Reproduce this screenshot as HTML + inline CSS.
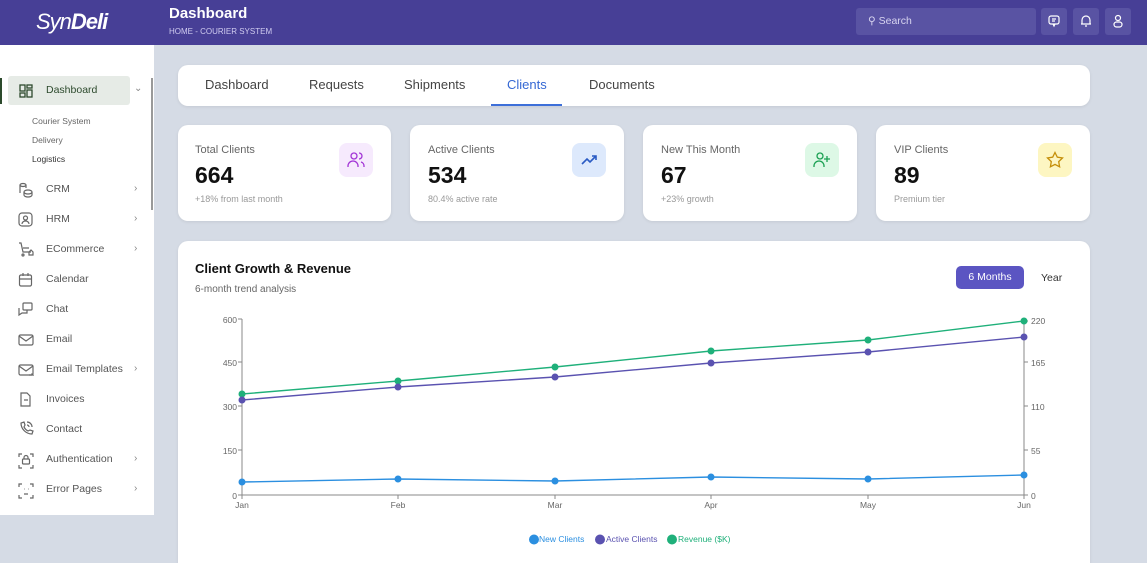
<!DOCTYPE html>
<html><head><meta charset="utf-8"><style>
*{margin:0;padding:0;box-sizing:border-box}
html,body{width:1147px;height:563px;overflow:hidden}
body{background:#d5dbe5;font-family:"Liberation Sans",sans-serif;position:relative}
.a{position:absolute}
.hdr{left:0;top:0;width:1147px;height:45px;background:#473f96}
.sb{left:0;top:45px;width:154px;height:470px;background:#fff}
.card{background:#fff;border-radius:10px;box-shadow:0 1px 3px rgba(0,0,0,.08)}
.nav{position:absolute;left:46px;font-size:10.5px;color:#555}
.ic{position:absolute;left:19px;width:14px;height:14px}
.chev{position:absolute;left:134px;font-size:10px;color:#888}
.tab{position:absolute;top:77px;font-size:13px;color:#444}
.lbl{position:absolute;font-size:11px;color:#666}
.num{position:absolute;font-size:23px;font-weight:bold;color:#111}
.sub{position:absolute;font-size:9px;color:#999}
.ib{position:absolute;width:34px;height:34px;border-radius:8px}
</style></head><body>
<div class="a hdr"></div>
<div class="a" style="left:36px;top:9px;color:#fff;font-size:22px;font-style:italic;letter-spacing:-1px">Syn<b>Deli</b></div>
<div class="a" style="left:169px;top:5px;color:#fff;font-size:15px;font-weight:bold">Dashboard</div>
<div class="a" style="left:169px;top:27px;color:#d0ccf0;font-size:8px">HOME - COURIER SYSTEM</div>
<div class="a" style="left:856px;top:8px;width:180px;height:27px;background:#5953a3;border-radius:3px"></div>
<div class="a" style="left:868px;top:15px;color:#d8d5f0;font-size:10.5px">&#9906; Search</div>
<div class="a" style="left:1041px;top:8px;width:26px;height:27px;background:#5953a3;border-radius:3px"></div>
<div class="a" style="left:1073px;top:8px;width:26px;height:27px;background:#5953a3;border-radius:3px"></div>
<div class="a" style="left:1105px;top:8px;width:26px;height:27px;background:#5953a3;border-radius:3px"></div>
<svg class="a" style="left:1047px;top:14px" width="14" height="14" viewBox="0 0 14 14" fill="none" stroke="#fff" stroke-width="1.2"><rect x="2" y="2" width="10" height="8" rx="2"/><path d="M5 5h4M5 7h3M6 10l1 2 1-2"/></svg>
<svg class="a" style="left:1079px;top:14px" width="14" height="14" viewBox="0 0 14 14" fill="none" stroke="#fff" stroke-width="1.2"><path d="M3 10V6a4 4 0 018 0v4zM2 10h10M6 12h2"/></svg>
<svg class="a" style="left:1111px;top:14px" width="14" height="14" viewBox="0 0 14 14" fill="none" stroke="#fff" stroke-width="1.2"><circle cx="7" cy="4" r="2.5"/><rect x="3" y="8" width="8" height="5" rx="2.5"/></svg>

<div class="a sb"></div>
<div class="a" style="left:151px;top:78px;width:2px;height:132px;background:#999"></div>
<div class="a" style="left:0;top:78px;width:2px;height:26px;background:#2c4a2c"></div>
<div class="a" style="left:8px;top:76px;width:122px;height:29px;background:#e6ebe6;border-radius:3px"></div>
<svg class="ic" style="top:84px" viewBox="0 0 14 14" fill="none" stroke="#2d4a2d" stroke-width="1.3"><rect x="1" y="1" width="5" height="6"/><rect x="8" y="1" width="5" height="3"/><rect x="8" y="6" width="5" height="7"/><rect x="1" y="9" width="5" height="4"/></svg>
<div class="nav" style="top:84px;color:#2d4a2d">Dashboard</div>
<div class="chev" style="top:83px">&#8964;</div>
<div class="a" style="left:32px;top:116px;font-size:8.5px;color:#666">Courier System</div>
<div class="a" style="left:32px;top:135px;font-size:8.5px;color:#666">Delivery</div>
<div class="a" style="left:32px;top:154px;font-size:8.5px;color:#333">Logistics</div>
<div class="nav" style="top:183px">CRM</div><div class="chev" style="top:183px">&#8250;</div>
<div class="nav" style="top:213px">HRM</div><div class="chev" style="top:213px">&#8250;</div>
<div class="nav" style="top:243px">ECommerce</div><div class="chev" style="top:243px">&#8250;</div>
<div class="nav" style="top:273px">Calendar</div>
<div class="nav" style="top:303px">Chat</div>
<div class="nav" style="top:333px">Email</div>
<div class="nav" style="top:363px">Email Templates</div><div class="chev" style="top:363px">&#8250;</div>
<div class="nav" style="top:393px">Invoices</div>
<div class="nav" style="top:423px">Contact</div>
<div class="nav" style="top:453px">Authentication</div><div class="chev" style="top:453px">&#8250;</div>
<div class="nav" style="top:483px">Error Pages</div><div class="chev" style="top:483px">&#8250;</div>
<svg class="a" style="left:18px;top:182px" width="16" height="320" viewBox="0 0 16 320" fill="none" stroke="#666" stroke-width="1.2">
<ellipse cx="5" cy="3" rx="3" ry="1.5"/><path d="M2 3v8M8 3v3"/><ellipse cx="10" cy="10" rx="4" ry="2"/><path d="M6 10v3a4 2 0 008 0v-3"/>
<rect x="1" y="31" width="13" height="13" rx="3"/><circle cx="7.5" cy="36" r="2"/><path d="M4 42a3.5 3 0 017 0"/>
<path d="M1 61h2l2 9h8M5 66h6"/><circle cx="5" cy="73" r="1"/><path d="M11 70l2-2 2 2v3h-4z"/>
<rect x="1.5" y="93" width="12" height="11" rx="1.5"/><path d="M1.5 97h12M5 91v3M10 91v3"/>
<rect x="5" y="121" width="9" height="7" rx="1"/><path d="M1 126v7l3-2h5v-3"/>
<rect x="1" y="153" width="14" height="10" rx="1.5"/><path d="M1 154l7 5 7-5"/>
<rect x="1" y="183" width="14" height="10" rx="1.5"/><path d="M1 184l7 5 7-5M11 193h4l-1.5-1.5"/>
<path d="M3 211h6l3 3v10H3z M6 218h4"/>
<path d="M3 241c0 6 5 11 11 11l1-3-3-1-2 1c-2-1-3-2-4-4l1-2-1-3z M9 240a5 5 0 015 5M9 243a2 2 0 012 2"/>
<path d="M1 275v-3h3M12 272h3v3M15 283v3h-3M4 286H1v-3"/><rect x="4.5" y="277" width="7" height="5" rx="1"/><path d="M6 277v-1.5a2 2 0 014 0V277"/>
<path d="M1 305v-3h3M12 302h3v3M15 313v3h-3M4 316H1v-3M6 307h.5M10 307h.5M6 312h4"/>
</svg>

<div class="a card" style="left:178px;top:65px;width:912px;height:41px"></div>
<div class="tab" style="left:205px">Dashboard</div>
<div class="tab" style="left:309px">Requests</div>
<div class="tab" style="left:404px">Shipments</div>
<div class="tab" style="left:507px;color:#3568d4">Clients</div>
<div class="tab" style="left:589px">Documents</div>
<div class="a" style="left:491px;top:104px;width:71px;height:2px;background:#3d6fd9"></div>

<div class="a card" style="left:178px;top:125px;width:213px;height:96px"></div>
<div class="a card" style="left:410px;top:125px;width:214px;height:96px"></div>
<div class="a card" style="left:643px;top:125px;width:214px;height:96px"></div>
<div class="a card" style="left:876px;top:125px;width:214px;height:96px"></div>
<div class="lbl" style="left:195px;top:144px">Total Clients</div><div class="num" style="left:195px;top:162px">664</div><div class="sub" style="left:195px;top:194px">+18% from last month</div>
<div class="lbl" style="left:428px;top:144px">Active Clients</div><div class="num" style="left:428px;top:162px">534</div><div class="sub" style="left:428px;top:194px">80.4% active rate</div>
<div class="lbl" style="left:661px;top:144px">New This Month</div><div class="num" style="left:661px;top:162px">67</div><div class="sub" style="left:661px;top:194px">+23% growth</div>
<div class="lbl" style="left:894px;top:144px">VIP Clients</div><div class="num" style="left:894px;top:162px">89</div><div class="sub" style="left:894px;top:194px">Premium tier</div>
<div class="ib" style="left:339px;top:143px;background:#f6eafd"></div>
<div class="ib" style="left:572px;top:143px;background:#dde9fc"></div>
<div class="ib" style="left:805px;top:143px;background:#ddf8e6"></div>
<div class="ib" style="left:1038px;top:143px;background:#fdf6c2"></div>
<svg class="a" style="left:347px;top:151px" width="18" height="18" viewBox="0 0 18 18" fill="none" stroke="#a235d6" stroke-width="1.3"><circle cx="7" cy="5" r="3"/><path d="M1 16v-1a5 5 0 0110 0v1M12 2a3 3 0 010 6M14 11a4 4 0 013 4v1"/></svg>
<svg class="a" style="left:580px;top:151px" width="18" height="18" viewBox="0 0 18 18" fill="none" stroke="#2a5bc4" stroke-width="1.6"><path d="M2 13l5-5 3 3 6-6M12 5h4v4"/></svg>
<svg class="a" style="left:813px;top:151px" width="18" height="18" viewBox="0 0 18 18" fill="none" stroke="#1aa052" stroke-width="1.3"><circle cx="7" cy="5" r="3"/><path d="M1 16v-1a5 5 0 0110 0v1M14 5v6M11 8h6"/></svg>
<svg class="a" style="left:1046px;top:151px" width="18" height="18" viewBox="0 0 18 18" fill="none" stroke="#c58f0a" stroke-width="1.3"><path d="M9 1.5l2.3 4.7 5.2.8-3.8 3.6.9 5.2L9 13.4l-4.6 2.4.9-5.2L1.5 7l5.2-.8z"/></svg>

<div class="a card" style="left:178px;top:241px;width:912px;height:340px;border-radius:10px 10px 0 0"></div>
<div class="a" style="left:195px;top:261px;font-size:13px;font-weight:bold;color:#111">Client Growth &amp; Revenue</div>
<div class="a" style="left:195px;top:284px;font-size:10px;color:#666">6-month trend analysis</div>
<div class="a" style="left:956px;top:266px;width:68px;height:23px;background:#5b55c2;border-radius:5px;color:#fff;font-size:10.5px;text-align:center;line-height:23px">6 Months</div>
<div class="a" style="left:1041px;top:272px;font-size:10.5px;color:#333">Year</div>

<svg class="a" style="left:0;top:0" width="1147" height="563" font-family="Liberation Sans, sans-serif" font-size="8.5" fill="#666">
<g stroke="#888" stroke-width="1" fill="none"><path d="M242 319V495H1024V319"/><path d="M238 319h4M238 362h4M238 406h4M238 450h4M238 495h4M1024 321h4M1024 362h4M1024 406h4M1024 450h4M1024 495h4M242 495v4M398 495v4M555 495v4M711 495v4M868 495v4M1024 495v4"/></g>
<g text-anchor="end"><text x="237" y="323">600</text><text x="237" y="366">450</text><text x="237" y="410">300</text><text x="237" y="454">150</text><text x="237" y="499">0</text></g>
<text x="1031" y="324">220</text><text x="1031" y="366">165</text><text x="1031" y="410">110</text><text x="1031" y="454">55</text><text x="1031" y="499">0</text>
<g text-anchor="middle"><text x="242" y="508">Jan</text><text x="398" y="508">Feb</text><text x="555" y="508">Mar</text><text x="711" y="508">Apr</text><text x="868" y="508">May</text><text x="1024" y="508">Jun</text></g>
<polyline fill="none" stroke="#1fb07a" stroke-width="1.4" points="242,394 398,381 555,367 711,351 868,340 1024,321"/>
<polyline fill="none" stroke="#5a52b0" stroke-width="1.4" points="242,400 398,387 555,377 711,363 868,352 1024,337"/>
<polyline fill="none" stroke="#2b8fe0" stroke-width="1.4" points="242,482 398,479 555,481 711,477 868,479 1024,475"/>
<g fill="#1fb07a"><circle cx="242" cy="394" r="3.5"/><circle cx="398" cy="381" r="3.5"/><circle cx="555" cy="367" r="3.5"/><circle cx="711" cy="351" r="3.5"/><circle cx="868" cy="340" r="3.5"/><circle cx="1024" cy="321" r="3.5"/></g>
<g fill="#5a52b0"><circle cx="242" cy="400" r="3.5"/><circle cx="398" cy="387" r="3.5"/><circle cx="555" cy="377" r="3.5"/><circle cx="711" cy="363" r="3.5"/><circle cx="868" cy="352" r="3.5"/><circle cx="1024" cy="337" r="3.5"/></g>
<g fill="#2b8fe0"><circle cx="242" cy="482" r="3.5"/><circle cx="398" cy="479" r="3.5"/><circle cx="555" cy="481" r="3.5"/><circle cx="711" cy="477" r="3.5"/><circle cx="868" cy="479" r="3.5"/><circle cx="1024" cy="475" r="3.5"/></g>
<circle cx="534" cy="539.5" r="5" fill="#2b8fe0"/><text x="539" y="542" fill="#2b8fe0">New Clients</text>
<circle cx="600" cy="539.5" r="5" fill="#5a52b0"/><text x="606" y="542" fill="#5a52b0">Active Clients</text>
<circle cx="672" cy="539.5" r="5" fill="#1fb07a"/><text x="678" y="542" fill="#1fb07a">Revenue ($K)</text>
</svg>
</body></html>
